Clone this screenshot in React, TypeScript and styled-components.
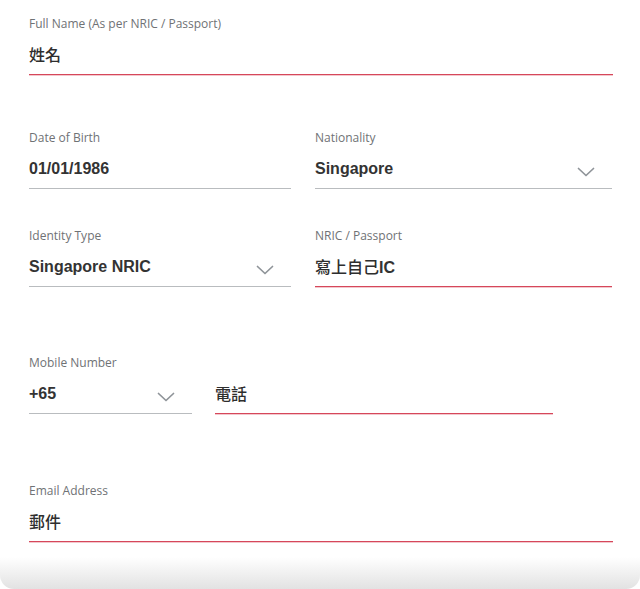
import styled, { createGlobalStyle } from 'styled-components';

const GlobalStyle = createGlobalStyle`
    html, body {
        margin: 0;
        padding: 0;
        background: #ffffff;
    }
    body {
        font-family: 'Open Sans', 'Noto Sans', sans-serif;
    }
`;

type FieldProps = {
    label: string;
    value: React.ReactNode;
    focused?: boolean;
    select?: boolean;
};

const Chevron = () => (
    <svg width="18" height="10" viewBox="0 0 18 10" fill="none">
        <path
            d="M1.5 1.5L9 8.5L16.5 1.5"
            stroke="#8f9499"
            strokeWidth="1.7"
            strokeLinecap="round"
            strokeLinejoin="round"
        />
    </svg>
);

const Field = ({ label, value, focused, select }: FieldProps) => (
    <FieldWrap>
        <Label>{label}</Label>
        <ValueRow $focused={focused}>
            <Value>{value}</Value>
            {select && (
                <ChevronBox>
                    <Chevron />
                </ChevronBox>
            )}
        </ValueRow>
    </FieldWrap>
);

const App = () => {
    return (
        <>
            <GlobalStyle />
            <Card>
                <Row $top={16}>
                    <Field
                        label="Full Name (As per NRIC / Passport)"
                        value={<Cjk>姓名</Cjk>}
                        focused
                    />
                </Row>
                <TwoCols $top={55}>
                    <Field label="Date of Birth" value="01/01/1986" />
                    <Field label="Nationality" value="Singapore" select />
                </TwoCols>
                <TwoCols $top={39}>
                    <Field label="Identity Type" value="Singapore NRIC" select />
                    <Field
                        label="NRIC / Passport"
                        value={
                            <>
                                <Cjk>寫上自己</Cjk>IC
                            </>
                        }
                        focused
                    />
                </TwoCols>
                <MobileRow $top={68}>
                    <FieldWrap>
                        <Label>Mobile Number</Label>
                        <ValueRow>
                            <Value>+65</Value>
                            <ChevronBox>
                                <Chevron />
                            </ChevronBox>
                        </ValueRow>
                    </FieldWrap>
                    <FieldWrap>
                        <Label>&nbsp;</Label>
                        <ValueRow $focused>
                            <Value>
                                <Cjk>電話</Cjk>
                            </Value>
                        </ValueRow>
                    </FieldWrap>
                </MobileRow>
                <Row $top={69}>
                    <Field
                        label="Email Address"
                        value={<Cjk>郵件</Cjk>}
                        focused
                    />
                </Row>
            </Card>
            <BottomShade />
        </>
    );
};

export default App;

const Card = styled.div`
    background: #ffffff;
    padding: 0 27px 0 29px;
    height: 557px;
    box-sizing: border-box;
`;

const Row = styled.div<{ $top: number }>`
    padding-top: ${(p) => p.$top}px;
`;

const TwoCols = styled.div<{ $top: number }>`
    display: grid;
    grid-template-columns: 262px 297px;
    column-gap: 24px;
    padding-top: ${(p) => p.$top}px;
`;

const MobileRow = styled.div<{ $top: number }>`
    display: grid;
    grid-template-columns: 163px 338px;
    column-gap: 23px;
    padding-top: ${(p) => p.$top}px;
`;

const FieldWrap = styled.div`
    display: flex;
    flex-direction: column;
`;

const Label = styled.div`
    font-family: 'Open Sans', 'Noto Sans', sans-serif;
    font-size: 12px;
    line-height: 16px;
    color: #6f7275;
    margin-bottom: 11px;
    white-space: nowrap;
`;

const ValueRow = styled.div<{ $focused?: boolean }>`
    display: flex;
    align-items: center;
    justify-content: space-between;
    height: 24px;
    padding-bottom: 7px;
    border-bottom: 1px solid
        ${(p) => (p.$focused ? '#d6475a' : '#b9bcbf')};
    box-shadow: ${(p) =>
        p.$focused ? '0 1px 0 rgba(214, 71, 90, 0.3)' : 'none'};
`;

const Value = styled.div`
    font-family: 'Liberation Sans', 'Noto Sans CJK TC', sans-serif;
    font-weight: 700;
    font-size: 16px;
    line-height: 24px;
    color: #333333;
`;

const Cjk = styled.span`
    font-family: 'Noto Sans CJK TC', sans-serif;
    font-weight: 500;
    color: #2e2e2e;
`;

const ChevronBox = styled.div`
    display: flex;
    margin-right: 17px;
    margin-top: 6px;
`;

const BottomShade = styled.div`
    height: 32px;
    background: linear-gradient(#ffffff, #e2e2e2);
    border-radius: 0 0 14px 14px;
`;
